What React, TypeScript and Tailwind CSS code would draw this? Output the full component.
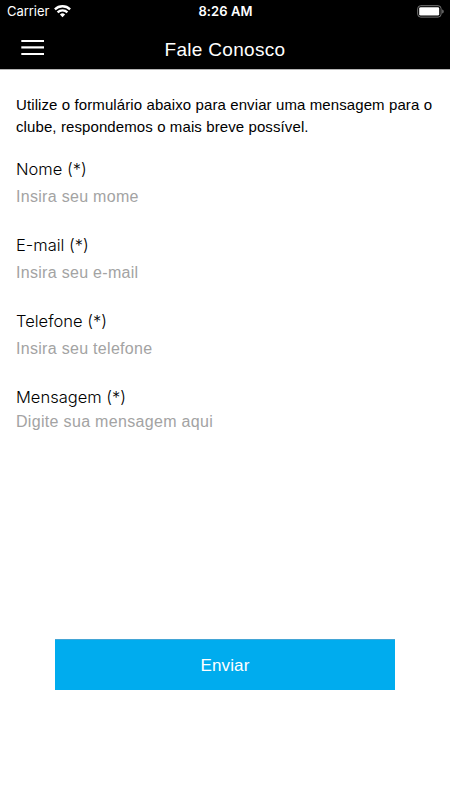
import { useState } from 'react';

type FieldName = 'nome' | 'email' | 'telefone';

const FIELDS: { name: FieldName; label: string; type: string; placeholder: string }[] = [
  { name: 'nome', label: 'Nome (*)', type: 'text', placeholder: 'Insira seu mome' },
  { name: 'email', label: 'E-mail (*)', type: 'email', placeholder: 'Insira seu e-mail' },
  { name: 'telefone', label: 'Telefone (*)', type: 'tel', placeholder: 'Insira seu telefone' },
];

function WifiIcon() {
  return (
    <svg width="17" height="13" viewBox="0 0 17 13" fill="none" stroke="#fff" strokeWidth="2.3">
      <path d="M0.9 4.4a10.8 10.8 0 0 1 15.2 0" />
      <path d="M3.6 7.4a6.9 6.9 0 0 1 9.8 0" />
      <path d="M8.5 12.2 5.9 9.6a3.7 3.7 0 0 1 5.2 0z" fill="#fff" stroke="none" />
    </svg>
  );
}

function BatteryIcon() {
  return (
    <svg width="27" height="13" viewBox="0 0 27 13" className="-mt-px">
      <rect x="0.7" y="0.7" width="23.4" height="11.4" rx="3" fill="none" stroke="#777" strokeWidth="1" />
      <rect x="2.2" y="2.2" width="20" height="8.4" rx="1.4" fill="#fff" />
      <path d="M25.2 4.4c1 .4 1.5 1.1 1.5 2s-.5 1.6-1.5 2z" fill="#777" />
    </svg>
  );
}

function StatusBar() {
  return (
    <div className="grid h-[23px] grid-cols-3 items-center pl-[7px] pr-[6px] text-[13px] leading-[23px]">
      <div className="flex items-center gap-[5px] font-['Inter',sans-serif]">
        <span className="tracking-[-0.05px]">Carrier</span>
        <WifiIcon />
      </div>
      <span className="text-center font-['Inter',sans-serif] font-semibold tracking-[0.05px]">8:26 AM</span>
      <div className="flex justify-end">
        <BatteryIcon />
      </div>
    </div>
  );
}

export default function App() {
  const [values, setValues] = useState({ nome: '', email: '', telefone: '' });
  const [mensagem, setMensagem] = useState('');

  return (
    <div className="h-[800px] w-[450px] overflow-hidden bg-white font-['Liberation_Sans',Arial,sans-serif] text-black">
      {/* Header */}
      <header className="h-[70px] border-b border-[#b5b5b5] bg-black text-white">
        <StatusBar />
        <div className="grid h-[46px] grid-cols-[1fr_auto_1fr] items-center">
          <button type="button" aria-label="Menu" className="ml-[21px] mt-[3px] w-[23px]">
            <svg width="23" height="16" viewBox="0 0 23 16" fill="#fff" className="block">
              <rect y="0" x="0.3" width="22.7" height="2" />
              <rect y="6.3" x="0.3" width="22.7" height="2.2" />
              <rect y="13" x="0.3" width="22.7" height="2" />
            </svg>
          </button>
          <h1 className="pt-[7px] text-[19px] leading-[24px] tracking-[0.3px]">Fale Conosco</h1>
        </div>
      </header>

      <form className="flex flex-col pt-[24px]" onSubmit={(e) => e.preventDefault()}>
        <p className="whitespace-nowrap px-4 text-[15px] leading-[22px] tracking-[0.1px]">
          Utilize o formulário abaixo para enviar uma mensagem para o
          <br />
          clube, respondemos o mais breve possível.
        </p>

        {/* Fields */}
        <div className="mt-[20px] flex flex-col px-4">
          {FIELDS.map((field) => (
            <label key={field.name} className="flex h-[76px] flex-col">
              <span className="font-['Inter',sans-serif] text-[16.5px] font-light leading-[23px]">{field.label}</span>
              <input
                type={field.type}
                value={values[field.name]}
                onChange={(e) => setValues({ ...values, [field.name]: e.target.value })}
                placeholder={field.placeholder}
                className="mt-[4px] h-[24px] text-[16px] tracking-[0.3px] outline-none placeholder:text-[#a3a3a3]"
              />
            </label>
          ))}
          <label className="flex flex-col">
            <span className="font-['Inter',sans-serif] text-[16.5px] font-light leading-[23px]">Mensagem (*)</span>
            <textarea
              value={mensagem}
              onChange={(e) => setMensagem(e.target.value)}
              placeholder="Digite sua mensagem aqui"
              className="mt-px h-[160px] resize-none text-[16px] leading-[24px] tracking-[0.32px] outline-none placeholder:text-[#a3a3a3]"
            />
          </label>
        </div>

        <button
          type="submit"
          className="mx-[55px] mt-[69px] h-[51px] border-t border-[#43a5d5] bg-[#00acee] pt-[2px] text-[17px] tracking-[0.15px] text-white"
        >
          Enviar
        </button>
      </form>
    </div>
  );
}
